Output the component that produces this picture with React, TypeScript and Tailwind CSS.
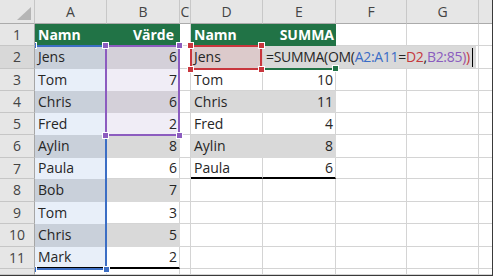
import React from 'react';

const LETTERS = ['A', 'B', 'C', 'D', 'E', 'F', 'G', ''];

const tableA: [string, number][] = [
  ['Jens', 6], ['Tom', 7], ['Chris', 6], ['Fred', 2], ['Aylin', 8],
  ['Paula', 6], ['Bob', 7], ['Tom', 3], ['Chris', 5], ['Mark', 2],
];

const tableD: [string, string][] = [
  ['Jens', ''], ['Tom', '10'], ['Chris', '11'], ['Fred', '4'], ['Aylin', '8'], ['Paula', '6'],
];

type CellProps = {
  fill?: string;
  right?: boolean;
  head?: boolean;
  thick?: boolean;
  edge?: boolean;
  pr?: string;
  children?: React.ReactNode;
};

function Cell({ fill, right, head, thick, edge, pr, children }: CellProps) {
  return (
    <div
      className={[
        'flex items-center overflow-hidden whitespace-nowrap',
        thick ? 'border-b-2' : 'border-b',
        edge ? '' : 'border-r',
        fill ? 'border-transparent' : 'border-[#d4d4d4]',
        thick ? 'border-b-black' : '',
        fill ?? '',
        right ? `justify-end ${pr ?? 'pr-[2px]'}` : 'pl-[3px]',
        head ? 'font-bold text-white' : 'text-[#262626]',
      ].join(' ')}
    >
      {children}
    </div>
  );
}

function renderCell(r: number, c: number) {
  const i = r - 2;
  const band = i % 2 === 0;
  const green = 'bg-[#217346]';
  switch (c) {
    case 0:
      if (r === 1) return <Cell fill={green} head>Namn</Cell>;
      if (r <= 11) return <Cell fill={band ? 'bg-[#c9d0da]' : 'bg-[#e8eff9]'} thick={r === 11}>{tableA[i][0]}</Cell>;
      return <Cell />;
    case 1:
      if (r === 1) return <Cell fill={green} head right pr="pr-[5px]">Värde</Cell>;
      if (r <= 5) return <Cell fill={band ? 'bg-[#d4d0d9]' : 'bg-[#f0edf6]'} right>{tableA[i][1]}</Cell>;
      if (r <= 11) return <Cell fill={band ? 'bg-[#d9d9d9]' : undefined} right thick={r === 11}>{tableA[i][1]}</Cell>;
      return <Cell />;
    case 3:
      if (r === 1) return <Cell fill={green} head>Namn</Cell>;
      if (r === 2) return <Cell fill="bg-[#dccacb]">Jens</Cell>;
      if (r <= 7) return <Cell fill={band ? 'bg-[#d9d9d9]' : undefined} thick={r === 7}>{tableD[i][0]}</Cell>;
      return <Cell />;
    case 4:
      if (r === 1) return <Cell fill={green} head right pr="pr-[1px]">SUMMA</Cell>;
      if (r === 2) return <Cell fill="bg-[#d9d9d9]" />;
      if (r <= 7) return <Cell fill={band ? 'bg-[#d9d9d9]' : undefined} right thick={r === 7}>{tableD[i][1]}</Cell>;
      return <Cell />;
    case 7:
      return <Cell edge />;
    default:
      return <Cell />;
  }
}

function Corner() {
  return (
    <div className="relative z-20 border-r border-b border-r-[#c6c6c6] border-b-[#ababab] bg-[#e6e6e6]">
      <svg width="34" height="23" className="block">
        <polygon points="17,20 31,20 31,7" fill="#b5b5b5" />
      </svg>
    </div>
  );
}

// range-finder frame with its corner handles; hide lists corners that are covered
function RangeBox({ className, handle, hide = [] }: { className: string; handle: string; hide?: string[] }) {
  const corners = [
    ['tl', '-left-[5px] -top-[5px]'],
    ['tr', '-right-[5px] -top-[5px]'],
    ['bl', '-left-[5px] -bottom-[5px]'],
    ['br', '-right-[5px] -bottom-[5px]'],
  ].filter(([k]) => !hide.includes(k));
  return (
    <div className={`absolute z-10 ${className}`}>
      {corners.map(([k, pos]) => (
        <span key={k} className={`absolute h-[7px] w-[7px] border border-white ${pos} ${handle}`} />
      ))}
    </div>
  );
}

export default function App() {
  const cells: React.ReactNode[] = [<Corner key="corner" />];

  LETTERS.forEach((l, k) => {
    cells.push(
      <div
        key={'h' + k}
        className={`relative z-20 flex items-center justify-center bg-[#e6e6e6] border-b border-b-[#ababab] text-[#444] ${k < 7 ? 'border-r border-r-[#c8c8c8]' : ''}`}
      >
        {l}
      </div>
    );
  });

  for (let r = 1; r <= 12; r++) {
    cells.push(
      <div
        key={'r' + r}
        className={`relative z-20 flex items-start justify-center overflow-hidden border-r border-b border-r-[#a6a6a6] border-b-[#c6c6c6] text-[#444] ${r === 2 ? 'bg-[#d8d8d8]' : 'bg-[#e6e6e6]'}`}
      >
        <div className="flex h-[21px] shrink-0 items-center">{r}</div>
      </div>
    );
    for (let c = 0; c < 8; c++) {
      cells.push(<React.Fragment key={r + '-' + c}>{renderCell(r, c)}</React.Fragment>);
    }
  }

  return (
    <div className="h-[276px] w-[493px] overflow-hidden border-r border-b border-[#3a3a3a] bg-white font-['Open_Sans',sans-serif] text-[14px] leading-none">
      <div className="relative grid grid-cols-[35px_72px_73px_11px_72px_73px_71px_72px_13px] grid-rows-[24px_22px_23px_22px_22px_22px_23px_21px_23px_22px_23px_22px_6px]">
        {cells}

        {/* in-cell editor for E2, spilling over F2:G2 */}
        <div className="absolute left-[263px] top-[46px] z-10 flex h-[22px] w-[213px] items-center whitespace-nowrap bg-[#d9d9d9] pl-[3px] tracking-[-0.3px] text-[#262626]">
          <span>=SUMMA(OM(</span>
          <span className="text-[#3a6cc6]">A2:A11</span>
          <span>=</span>
          <span className="text-[#c6383d]">D2</span>
          <span>,</span>
          <span className="text-[#8a5cbf]">B2:85</span>
          <span className="text-[#a34d9c]">)</span>
          <span className="text-[#c6383d]">)</span>
          <span className="ml-[2px] h-[19px] w-px bg-black" />
        </div>

        {/* active cell E2 */}
        <div className="absolute left-[262px] top-[68px] z-10 h-[2px] w-[73px] bg-[#217346]">
          <span className="absolute -right-[4px] -top-[3px] h-[7px] w-[7px] border border-white bg-[#217346]" />
        </div>

        <RangeBox className="left-[35px] top-[45px] h-[225px] w-[72px] border-t-2 border-r-2 border-b-2 border-[#3c6ec4]" handle="bg-[#3c6ec4]" hide={['tr']} />
        <RangeBox className="left-[105px] top-[45px] h-[91px] w-[75px] border-2 border-[#8c5cbf]" handle="bg-[#8c5cbf]" />
        <RangeBox className="left-[190px] top-[45px] h-[25px] w-[72px] border-2 border-[#c8363d]" handle="bg-[#c8363d]" />
      </div>
    </div>
  );
}
